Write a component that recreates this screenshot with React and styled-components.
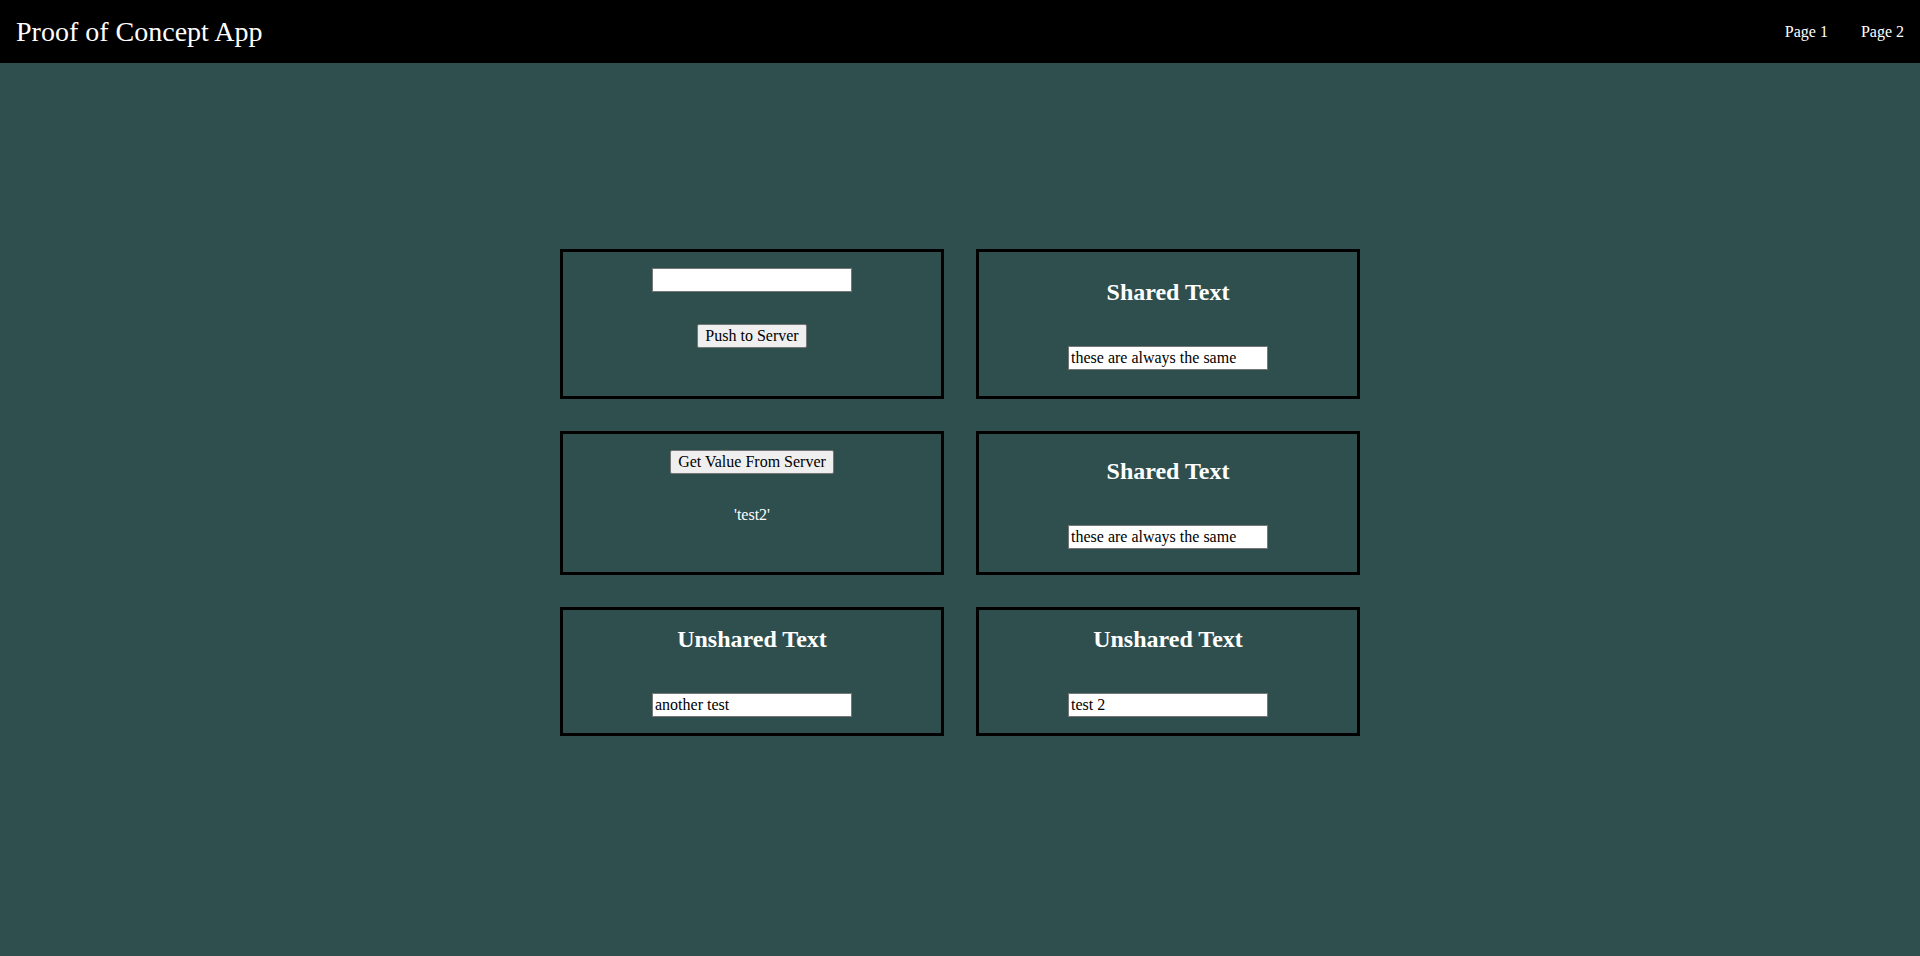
import React from "react"
import styled, { createGlobalStyle } from "styled-components"

const GlobalStyle = createGlobalStyle`
  html, body {
    margin: 0;
    padding: 0;
    background: #2f4f4f;
    font-family: "Liberation Serif", "Times New Roman", serif;
    color: white;
  }
  * {
    box-sizing: border-box;
  }
`

const Header = styled.header`
  display: flex;
  align-items: center;
  justify-content: space-between;
  height: 63px;
  padding: 0 16px;
  background: #000;
`

const Title = styled.div`
  font-size: 28px;
  color: white;
`

const Nav = styled.nav`
  display: flex;
  gap: 33px;
`

const NavLink = styled.a`
  font-size: 16px;
  color: white;
  text-decoration: none;
`

const Main = styled.main`
  display: grid;
  grid-template-columns: 384px 384px;
  column-gap: 32px;
  row-gap: 32px;
  justify-content: center;
  padding-top: 186px;
`

const Card = styled.div`
  display: flex;
  flex-direction: column;
  align-items: center;
  justify-content: center;
  gap: ${props => props.gap || 32}px;
  padding: 16px 16px ${props => props.bottom || 16}px;
  border: 3px solid #000;
`

const CardTitle = styled.h2`
  margin: 0;
  font-size: 24px;
  line-height: 27px;
  font-weight: bold;
  color: white;
`

const TextInput = styled.input`
  width: 200px;
  height: 24px;
  padding: 0 2px;
  border: 1px solid #767676;
  border-radius: 0;
  background: white;
  color: black;
  font-family: "Liberation Serif", "Times New Roman", serif;
  font-size: 16px;
  outline: none;
`

const Button = styled.button`
  height: 24px;
  padding: 0 7px;
  border: 1px solid #767676;
  border-radius: 2px;
  background: #efefef;
  color: black;
  font-family: "Liberation Serif", "Times New Roman", serif;
  font-size: 16px;
  cursor: pointer;
`

const Result = styled.div`
  font-size: 16px;
  color: white;
`

const SharedCard = ({ title, value }) => (
  <Card gap={40}>
    <CardTitle>{title}</CardTitle>
    <TextInput defaultValue={value} />
  </Card>
)

const App = () => {
  return (
    <>
      <GlobalStyle />
      <Header>
        <Title>Proof of Concept App</Title>
        <Nav>
          <NavLink href="#">Page 1</NavLink>
          <NavLink href="#">Page 2</NavLink>
        </Nav>
      </Header>
      <Main>
        <Card bottom={48}>
          <TextInput defaultValue="" />
          <Button>Push to Server</Button>
        </Card>
        <SharedCard title="Shared Text" value="these are always the same" />
        <Card bottom={48}>
          <Button>Get Value From Server</Button>
          <Result>'test2'</Result>
        </Card>
        <SharedCard title="Shared Text" value="these are always the same" />
        <SharedCard title="Unshared Text" value="another test" />
        <SharedCard title="Unshared Text" value="test 2" />
      </Main>
    </>
  )
}

export default App
